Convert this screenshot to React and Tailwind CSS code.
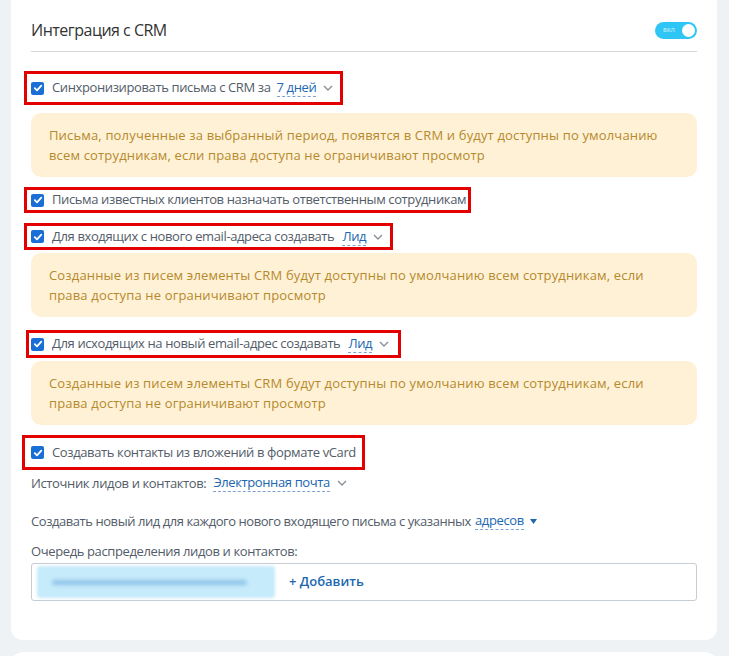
import React from "react";

function Check() {
  return (
    <span className="flex h-[13px] w-[13px] shrink-0 items-center justify-center rounded-[2px] bg-[#1a6fd6]">
      <svg width="10" height="10" viewBox="0 0 10 10">
        <path d="M1.8 5.2 L4 7.4 L8.3 2.6" fill="none" stroke="white" strokeWidth="1.8" strokeLinecap="round" strokeLinejoin="round" />
      </svg>
    </span>
  );
}

function Chevron({ className = "" }) {
  return (
    <svg width="10" height="6" viewBox="0 0 10 6" className={className}>
      <path d="M1 1 L5 5 L9 1" fill="none" stroke="#8a9099" strokeWidth="1.4" />
    </svg>
  );
}

function Link({ children }) {
  return (
    <span className="border-b border-dashed border-[#7fa3cf] leading-[17px] text-[#2067b0]">{children}</span>
  );
}

function Notice({ children }) {
  return (
    <div className="rounded-[10px] bg-[#fff1d6] py-3 pl-[18px] pr-4 text-[13px] leading-5 tracking-[0.16px] text-[#b5892c]">
      {children}
    </div>
  );
}

const row = "inline-flex items-center gap-[8px] border-[3px] border-[#e30000] text-[13px] tracking-[-0.38px] text-[#535c69]";
const plain = "flex items-center text-[13px] leading-[20px] tracking-[-0.38px] text-[#535c69]";

export default function App() {
  return (
    <div className="min-h-[656px] bg-[#eef2f4] pl-[11px] pr-[12px]" style={{ fontFamily: '"Open Sans", "Noto Sans", sans-serif' }}>
      <div className="rounded-b-[12px] bg-white px-5 pb-[39px]">
        <div className="flex items-center justify-between border-b border-[#d5d9dd] pt-[18px] pb-[9px]">
          <div className="text-[16px] leading-6 tracking-[-0.5px] text-[#333]">Интеграция с CRM</div>
          <div className="flex h-[17px] w-[42px] items-center justify-between rounded-full bg-[#2fc6f6] pl-[8px] pr-[2px]">
            <span className="text-[6px] leading-none text-white/80">ВКЛ</span>
            <span className="h-[13px] w-[13px] rounded-full bg-white" />
          </div>
        </div>

        <div className={`${row} mt-[19px] -ml-[7px] h-[34px] pl-[4px] pr-[7px]`}>
          <Check />
          <span>Синхронизировать письма с CRM за</span>
          <span className="ml-[-2px] flex items-center gap-[7px]"><Link>7 дней</Link><Chevron /></span>
        </div>

        <div className="mt-[8px]">
          <Notice>
            Письма, полученные за выбранный период, появятся в CRM и будут доступны по умолчанию
            <br />всем сотрудникам, если права доступа не ограничивают просмотр
          </Notice>
        </div>

        <div>
          <div className={`${row} mt-[10px] -ml-[7px] h-[26px] pl-[4px] pr-[2px]`}>
            <Check />
            <span>Письма известных клиентов назначать ответственным сотрудникам</span>
          </div>
        </div>

        <div>
          <div className={`${row} mt-[10px] -ml-[7px] h-[27px] pl-[4px] pr-[7px]`}>
            <Check />
            <span>Для входящих с нового email-адреса создавать</span>
            <span className="flex items-center gap-[7px]"><Link>Лид</Link><Chevron /></span>
          </div>
        </div>

        <div className="mt-[3px]">
          <Notice>
            Созданные из писем элементы CRM будут доступны по умолчанию всем сотрудникам, если
            <br />права доступа не ограничивают просмотр
          </Notice>
        </div>

        <div>
          <div className={`${row} mt-[13px] -ml-[5px] h-[28px] pl-[2px] pr-[9px]`}>
            <Check />
            <span>Для исходящих на новый email-адрес создавать</span>
            <span className="flex items-center gap-[7px]"><Link>Лид</Link><Chevron /></span>
          </div>
        </div>

        <div className="mt-[3px]">
          <Notice>
            Созданные из писем элементы CRM будут доступны по умолчанию всем сотрудникам, если
            <br />права доступа не ограничивают просмотр
          </Notice>
        </div>

        <div>
          <div className={`${row} mt-[10px] -ml-[9px] h-[35px] pl-[6px] pr-[6px]`}>
            <Check />
            <span>Создавать контакты из вложений в формате vCard</span>
          </div>
        </div>

        <div className={`${plain} mt-[3px] gap-[7px]`}>
          <span>Источник лидов и контактов:</span>
          <span className="flex items-center gap-[7px]"><Link>Электронная почта</Link><Chevron /></span>
        </div>

        <div className={`${plain} mt-[18px] gap-[4px]`}>
          <span className="tracking-[-0.44px]">Создавать новый лид для каждого нового входящего письма с указанных</span>
          <span className="flex items-center gap-[6px]"><Link>адресов</Link>
            <svg width="7" height="5" viewBox="0 0 7 5"><path d="M0 0 H7 L3.5 5 Z" fill="#2067b0" /></svg>
          </span>
        </div>

        <div className={`${plain} mt-[10px]`}>Очередь распределения лидов и контактов:</div>

        <div className="mt-[2px] flex h-[38px] items-center rounded-[3px] border border-[#c6cdd3] pl-[5px]">
          <div className="flex h-[32px] w-[238px] items-center rounded-[3px] bg-[#c6ebfb] pl-[15px] blur-[1.5px]">
            <div className="h-[5px] w-[195px] rounded-full bg-[#8fc3e8] blur-[1.5px]" />
          </div>
          <span className="ml-[14px] text-[13px] font-semibold text-[#2067b0]">+ Добавить</span>
        </div>
      </div>
      <div className="mt-[12px] h-[20px] rounded-t-[12px] bg-white" />
    </div>
  );
}
